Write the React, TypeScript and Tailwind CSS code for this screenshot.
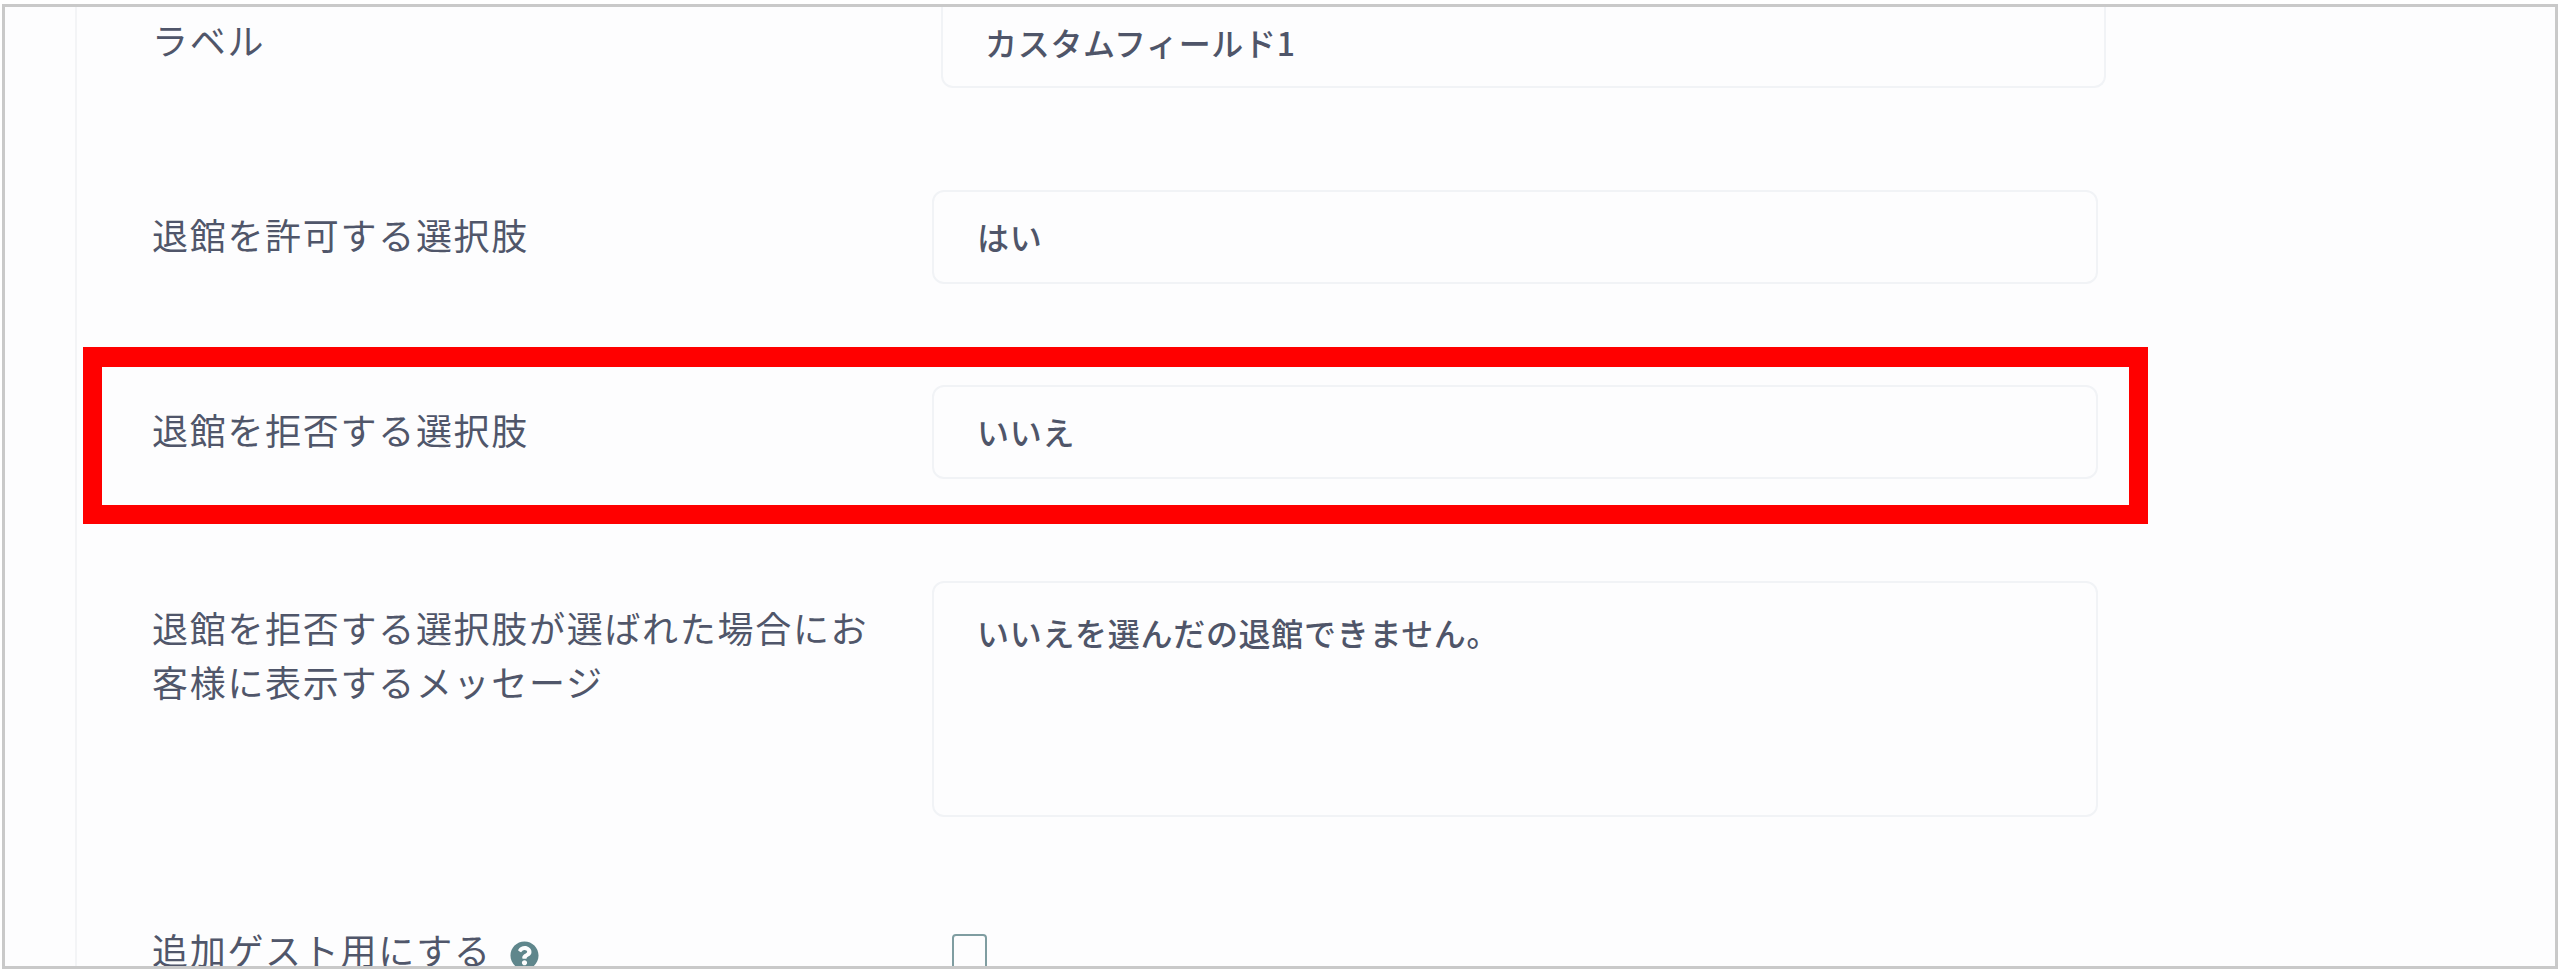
import { FaQuestionCircle } from 'react-icons/fa';

const labelClass = "w-[780px] shrink-0 text-[36px] leading-[54px] tracking-[1.7px] text-[#50566a]";
const fieldClass = "w-[1166px] h-[94px] border-2 border-[#f1f3f6] rounded-[12px] bg-transparent pb-[2px] pl-[43px] text-[32px] tracking-[0.7px] font-medium text-[#4f5569] outline-none";

export default function App() {
  return (
    <div className="h-[971px] bg-white pt-[4px] pl-[2px] pr-[2px] font-['Noto_Sans_CJK_JP','Noto_Sans',sans-serif]">
      <div className="relative h-[965px] overflow-hidden border-[3px] border-[#c9c9c9] bg-[#fdfdfe]">
        <div className="ml-[70px] h-full border-l-2 border-[#f3f4f6] pl-[75px]">
          {/* Label row, cut off by the top of the picture */}
          <div className="flex">
            <div className={labelClass + " pt-[5px]"}>ラベル</div>
            <input
              readOnly
              value="カスタムフィールド1"
              className="ml-[9px] h-[81px] w-[1165px] rounded-b-[12px] border-2 border-t-0 border-[#f1f3f6] bg-transparent pb-[10px] pl-[42px] text-[32px] tracking-[0.7px] font-medium text-[#4f5569] outline-none"
            />
          </div>

          <div className="mt-[102px] flex items-center">
            <div className={labelClass + " pb-[6px]"}>退館を許可する選択肢</div>
            <input readOnly value="はい" className={fieldClass} />
          </div>

          <div className="mt-[101px] flex items-center">
            <div className={labelClass + " pb-[6px]"}>退館を拒否する選択肢</div>
            <input readOnly value="いいえ" className={fieldClass} />
          </div>

          <div className="mt-[102px] flex">
            <div className={labelClass + " pt-[19px]"}>
              退館を拒否する選択肢が選ばれた場合にお
              <br />
              客様に表示するメッセージ
            </div>
            <textarea
              readOnly
              value="いいえを選んだの退館できません。"
              className="h-[236px] w-[1166px] resize-none rounded-[12px] border-2 border-[#f1f3f6] bg-transparent pl-[43px] pt-[25px] text-[32px] tracking-[0.7px] font-medium text-[#4f5569] outline-none"
            />
          </div>

          <div className="mt-[117px] flex">
            <div className={labelClass + " flex h-[30px] items-center gap-[18px]"}>
              追加ゲスト用にする
              <FaQuestionCircle className="mt-[13px] shrink-0 text-[29px] text-[#5f868c]" />
            </div>
            <div className="ml-[20px] h-[36px] w-[35px] shrink-0 rounded-[4px] border-2 border-[#7f9da1]" />
          </div>
        </div>

        {/* Red highlight over the third row */}
        <div className="absolute left-[78px] top-[340px] h-[177px] w-[2065px] border-x-[19px] border-t-[20px] border-b-[19px] border-[#ff0000]" />
      </div>
    </div>
  );
}
